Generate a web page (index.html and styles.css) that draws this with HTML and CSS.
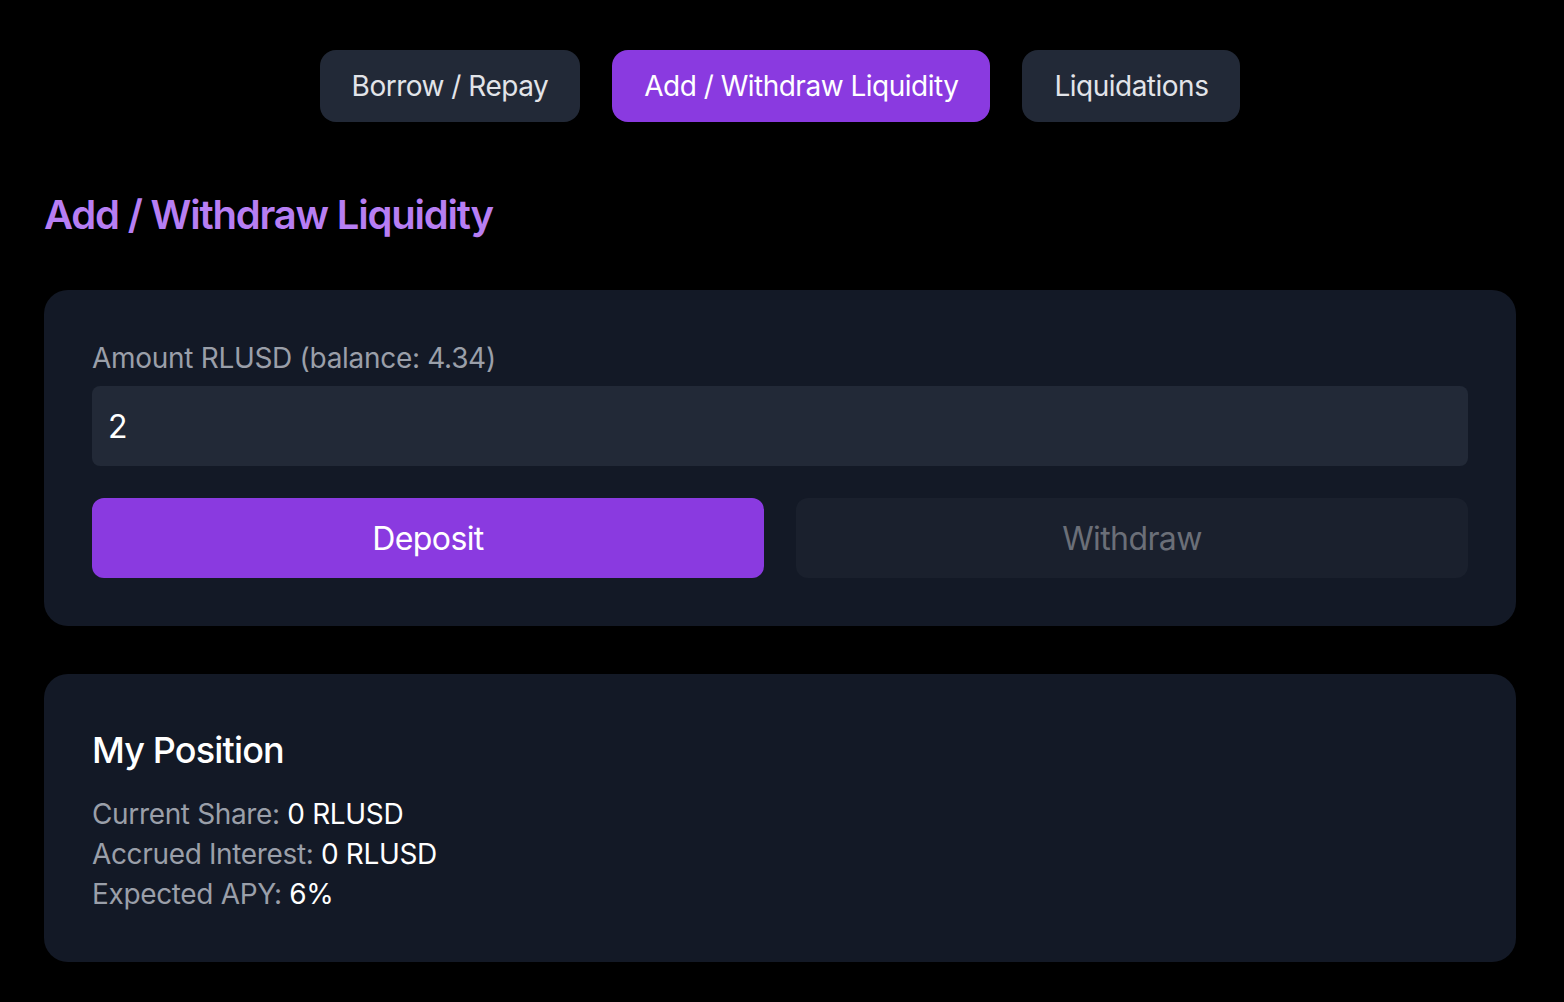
FILE: index.html
```html
<!DOCTYPE html>
<html lang="en">
<head>
<meta charset="utf-8">
<title>Add / Withdraw Liquidity</title>
<link rel="stylesheet" href="styles.css">
</head>
<body>
<div class="page">
  <nav class="tabs">
    <button class="tab">Borrow / Repay</button>
    <button class="tab tab-active">Add / Withdraw Liquidity</button>
    <button class="tab">Liquidations</button>
  </nav>

  <h1 class="title">Add / Withdraw Liquidity</h1>

  <section class="card">
    <label class="label" for="amount">Amount RLUSD (balance: 4.34)</label>
    <input id="amount" class="input" type="text" value="2">
    <div class="actions">
      <button class="btn btn-primary">Deposit</button>
      <button class="btn btn-disabled" disabled>Withdraw</button>
    </div>
  </section>

  <section class="card card-position">
    <h2 class="card-title">My Position</h2>
    <div class="stats">
      <div class="stat"><span class="stat-label">Current Share:</span> <span class="stat-value">0 RLUSD</span></div>
      <div class="stat"><span class="stat-label">Accrued Interest:</span> <span class="stat-value">0 RLUSD</span></div>
      <div class="stat"><span class="stat-label">Expected APY:</span> <span class="stat-value">6%</span></div>
    </div>
  </section>
</div>
</body>
</html>
```

FILE: styles.css
```css
* { box-sizing: border-box; }

html, body {
  margin: 0;
  padding: 0;
  background: #000;
}

body {
  font-family: Inter, "Noto Sans", "Liberation Sans", sans-serif;
  color: #f3f4f6;
  -webkit-font-smoothing: antialiased;
}

.page {
  padding: 50px 48px 40px 44px;
  display: flex;
  flex-direction: column;
}

.tabs {
  display: flex;
  justify-content: center;
  gap: 32px;
}

.tab {
  font-family: inherit;
  font-size: 28px;
  line-height: 40px;
  padding: 16px 32px;
  border: 0;
  border-radius: 16px;
  background: #222937;
  color: #e2e4e9;
  cursor: pointer;
  letter-spacing: -0.5px;
}

.tab-active {
  background: #8a3ae0;
  color: #fff;
}

.title {
  margin: 65px 0 47px 0;
  font-size: 40px;
  line-height: 56px;
  font-weight: 600;
  color: #b77ef3;
  letter-spacing: -1.2px;
}

.card {
  background: #131926;
  border-radius: 24px;
  padding: 48px;
  display: flex;
  flex-direction: column;
}

.card-position {
  margin-top: 48px;
}

.label {
  font-size: 28px;
  line-height: 40px;
  color: #9a9fa9;
  margin-bottom: 8px;
  letter-spacing: -0.3px;
}

.input {
  font-family: inherit;
  height: 80px;
  border: 0;
  border-radius: 8px;
  background: #222937;
  color: #fff;
  font-size: 32px;
  padding: 0 16px;
  outline: none;
}

.actions {
  margin-top: 32px;
  display: grid;
  grid-template-columns: 1fr 1fr;
  gap: 32px;
}

.btn {
  font-family: inherit;
  height: 80px;
  border: 0;
  border-radius: 12px;
  font-size: 32px;
  letter-spacing: -0.6px;
}

.btn-primary {
  background: #8a3ae0;
  color: #fff;
}

.btn-disabled {
  background: #1a202d;
  color: #6b6f78;
}

.card-title {
  margin: 0 0 16px 0;
  font-size: 36px;
  line-height: 56px;
  font-weight: 500;
  color: #fff;
  letter-spacing: -0.85px;
}

.stats {
  display: flex;
  flex-direction: column;
}

.stat {
  font-size: 28px;
  line-height: 40px;
  letter-spacing: -0.35px;
}

.stat-label { color: #9a9fa9; }
.stat-value { color: #fff; }
```
